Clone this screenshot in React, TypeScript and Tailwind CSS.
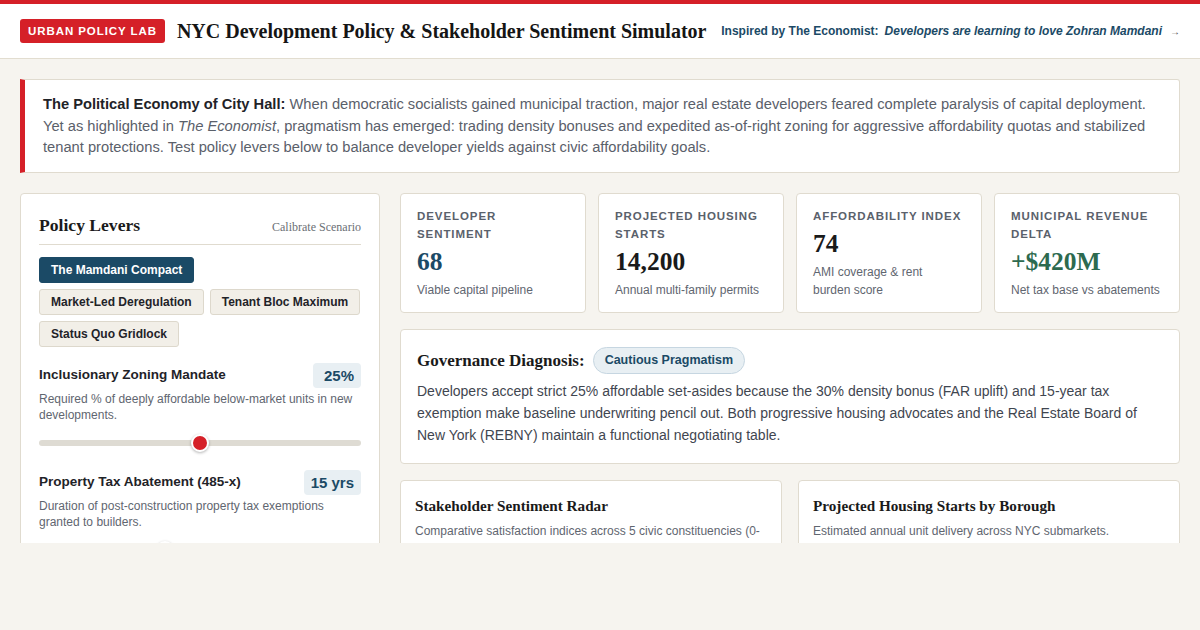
const sans = "font-['Liberation_Sans',Arial,sans-serif]";
const serif = "font-['Liberation_Serif','Times_New_Roman',serif]";

const presets = [
  { label: "The Mamdani Compact", active: true },
  { label: "Market-Led Deregulation", active: false },
  { label: "Tenant Bloc Maximum", active: false },
  { label: "Status Quo Gridlock", active: false },
];

const kpis = [
  { label: "Developer Sentiment", value: "68", color: "text-[#1b4a66]", sub: "Viable capital pipeline" },
  { label: "Projected Housing Starts", value: "14,200", color: "text-[#1a1a1a]", sub: "Annual multi-family permits" },
  { label: "Affordability Index", value: "74", color: "text-[#1a1a1a]", sub: "AMI coverage & rent\nburden score" },
  { label: "Municipal Revenue Delta", value: "+$420M", color: "text-[#2d6a4f]", sub: "Net tax base vs abatements" },
];

function Lever({ title, value, desc, pct }: { title: string; value: string; desc: string; pct: number }) {
  return (
    <div>
      <div className="flex items-center justify-between">
        <span className="text-[13.5px] font-bold text-[#1f2328]">{title}</span>
        <span className="min-w-[48px] rounded bg-[#e8eff3] px-[7px] py-[3px] text-right text-[15px] font-bold leading-[19px] text-[#1b4a66]">
          {value}
        </span>
      </div>
      <p className="mt-[3px] text-[12px] leading-[16px] text-[#5f6670]">{desc}</p>
      <div className="relative mt-[17px] h-[6px] rounded-full bg-[#dedbd3]">
        <div
          className="absolute top-1/2 h-[18px] w-[18px] -translate-x-1/2 -translate-y-1/2 rounded-full border-2 border-white bg-[#d52028] shadow-[0_1px_3px_rgba(0,0,0,0.3)]"
          style={{ left: `${pct}%` }}
        />
      </div>
    </div>
  );
}

export default function App() {
  return (
    <div className={`min-h-screen bg-[#f6f4ef] ${sans}`}>
      <div className="h-[543px] overflow-hidden">
        {/* Header */}
        <header className="border-t-4 border-b border-t-[#d52028] border-b-[#e2ddd0] bg-white">
          <div className="flex h-[54px] items-center whitespace-nowrap px-5">
            <span className="shrink-0 rounded-[3px] bg-[#d52028] px-[8px] py-[5px] text-[11.5px] font-bold leading-[14px] tracking-[0.08em] text-white">
              URBAN POLICY LAB
            </span>
            <h1 className={`${serif} ml-3 shrink-0 text-[20px] font-bold text-[#151515]`}>
              NYC Development Policy &amp; Stakeholder Sentiment Simulator
            </h1>
            <div className="ml-auto flex items-center text-[12px] font-bold text-[#1b4a66]">
              <span>Inspired by The Economist:</span>
              <span className="ml-[6px] italic">Developers are learning to love Zohran Mamdani</span>
              <span className="ml-[8px] text-[10px] font-normal text-[#555]">→</span>
            </div>
          </div>
        </header>

        <main className="px-5 pt-5">
          {/* Intro */}
          <div className="rounded-r-[3px] border border-l-[5px] border-[#e0dbcf] border-l-[#d52028] bg-white pt-[14px] pb-[13px] pl-[18px] pr-6 text-[14.7px] leading-[21.5px] text-[#5a606a]">
            <b className="text-[#1f2328]">The Political Economy of City Hall:</b> When democratic socialists gained municipal traction, major real estate developers feared complete paralysis of capital deployment. Yet as highlighted in <i>The Economist</i>, pragmatism has emerged: trading density bonuses and expedited as-of-right zoning for aggressive affordability quotas and stabilized tenant protections. Test policy levers below to balance developer yields against civic affordability goals.
          </div>

          <div className="mt-5 flex gap-5">
            {/* Policy Levers */}
            <aside className="w-[360px] shrink-0 rounded-[4px] border border-[#e0dbcf] bg-white px-[18px] pt-[17px] pb-6">
              <div className="flex items-baseline justify-between border-b border-[#e0dbcf] pb-[5px]">
                <h2 className={`${serif} text-[17.6px] leading-[28px] font-bold text-[#1a1a1a]`}>Policy Levers</h2>
                <span className={`${serif} text-[12px] text-[#6b6f75]`}>Calibrate Scenario</span>
              </div>
              <div className="mt-3 flex flex-wrap gap-[6px]">
                {presets.map((p) => (
                  <button
                    key={p.label}
                    className={
                      p.active
                        ? "rounded-[3px] border border-[#1b4a66] bg-[#1b4a66] px-[11px] py-[4px] text-[12px] font-bold leading-[16px] text-white"
                        : "rounded-[3px] border border-[#ddd8cc] bg-[#f2efe8] px-[11px] py-[4px] text-[12px] font-bold leading-[16px] text-[#1f2328]"
                    }
                  >
                    {p.label}
                  </button>
                ))}
              </div>
              <div className="mt-4">
                <Lever
                  title="Inclusionary Zoning Mandate"
                  value="25%"
                  desc="Required % of deeply affordable below-market units in new developments."
                  pct={50}
                />
              </div>
              <div className="mt-[24px]">
                <Lever
                  title="Property Tax Abatement (485-x)"
                  value="15 yrs"
                  desc="Duration of post-construction property tax exemptions granted to builders."
                  pct={39}
                />
              </div>
            </aside>

            {/* Right column */}
            <section className="flex-1">
              <div className="grid grid-cols-4 gap-3">
                {kpis.map((k) => (
                  <div key={k.label} className="h-[120px] rounded-[4px] border border-[#e0dbcf] bg-white px-4 pt-[13px]">
                    <div className="text-[11.5px] font-bold uppercase leading-[18px] tracking-[0.08em] text-[#5a616b]">{k.label}</div>
                    <div className={`${serif} mt-[3px] text-[25.5px] font-bold leading-[32px] ${k.color}`}>{k.value}</div>
                    <div className="mt-[3px] whitespace-pre-line text-[12px] leading-[18px] text-[#5f6670]">{k.sub}</div>
                  </div>
                ))}
              </div>

              <div className="mt-4 rounded-[4px] border border-[#e0dbcf] bg-white px-4 pt-[17px] pb-[17px]">
                <div className="flex items-center gap-2">
                  <h3 className={`${serif} text-[17px] leading-[28px] font-bold text-[#1a1a1a]`}>Governance Diagnosis:</h3>
                  <span className="rounded-full border border-[#c6d6e1] bg-[#e8eff3] px-[11px] py-[4px] text-[12.5px] font-bold leading-[17px] text-[#1b4a66]">
                    Cautious Pragmatism
                  </span>
                </div>
                <p className="mt-[5px] text-[14px] leading-[22px] text-[#3f4650]">
                  Developers accept strict 25% affordable set-asides because the 30% density bonus (FAR uplift) and 15-year tax exemption make baseline underwriting pencil out. Both progressive housing advocates and the Real Estate Board of New York (REBNY) maintain a functional negotiating table.
                </p>
              </div>

              <div className="mt-4 grid grid-cols-2 gap-4">
                <div className="h-[200px] rounded-[4px] border border-[#e0dbcf] bg-white px-[14px] pt-[14px]">
                  <h4 className={`${serif} text-[15.2px] leading-[22px] font-bold text-[#1a1a1a]`}>Stakeholder Sentiment Radar</h4>
                  <p className="mt-[5px] text-[12px] leading-[18px] text-[#5f6670]">
                    Comparative satisfaction indices across 5 civic constituencies (0-100).
                  </p>
                </div>
                <div className="h-[200px] rounded-[4px] border border-[#e0dbcf] bg-white px-[14px] pt-[14px]">
                  <h4 className={`${serif} text-[15.2px] leading-[22px] font-bold text-[#1a1a1a]`}>Projected Housing Starts by Borough</h4>
                  <p className="mt-[5px] text-[12px] leading-[18px] text-[#5f6670]">
                    Estimated annual unit delivery across NYC submarkets.
                  </p>
                </div>
              </div>
            </section>
          </div>
        </main>
      </div>
    </div>
  );
}
